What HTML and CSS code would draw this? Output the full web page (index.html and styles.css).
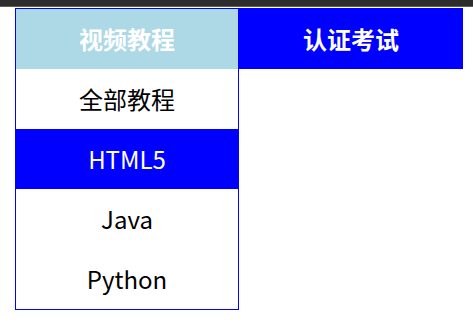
FILE: index.html
```html
<!DOCTYPE html>
<html lang="zh-CN">
<head>
    <meta charset="UTF-8">
    <meta name="viewport" content="width=device-width, initial-scale=1.0">
    <title>导航菜单</title>
    <link rel="stylesheet" href="styles.css">
</head>
<body>

    <!-- Top bar -->
    <div class="topbar"></div>

    <!-- Menu -->
    <ul class="menu">
        <li class="menu-item open">
            <a href="#" class="menu-title">视频教程</a>
            <ul class="submenu">
                <li><a href="#">全部教程</a></li>
                <li class="active"><a href="#">HTML5</a></li>
                <li><a href="#">Java</a></li>
                <li><a href="#">Python</a></li>
            </ul>
        </li>
        <li class="menu-item">
            <a href="#" class="menu-title">认证考试</a>
        </li>
    </ul>

</body>
</html>
```

FILE: styles.css
```css
/* Global Styles */
body {
    font-family: "Noto Sans CJK SC", "Noto Sans", sans-serif;
    margin: 0;
    padding: 0;
    background-color: #fff;
}

ul {
    list-style: none;
    margin: 0;
    padding: 0;
}

a {
    text-decoration: none;
    color: inherit;
}

.topbar {
    height: 6px;
    background-color: #2d2d2d;
    border-bottom: 1px solid #5e5e5e;
}

.menu {
    display: flex;
    align-items: flex-start;
    margin: 1px 0 0 15px;
}

.menu-item {
    width: 224px;
    background-color: #0000ff;
}

.menu-title {
    display: block;
    height: 61px;
    line-height: 61px;
    text-align: center;
    font-size: 24px;
    font-weight: bold;
    color: #fff;
}

.menu-item.open {
    box-sizing: border-box;
    border: 1px solid #0000ff;
    background-color: #fff;
}

.menu-item.open .menu-title {
    height: 60px;
    line-height: 60px;
    background-color: #add8e6;
}

.submenu li a {
    display: block;
    height: 60px;
    line-height: 60px;
    text-align: center;
    font-size: 24px;
    color: #000;
}

.submenu li.active a {
    background-color: #0000ff;
    color: #fff;
}
```
